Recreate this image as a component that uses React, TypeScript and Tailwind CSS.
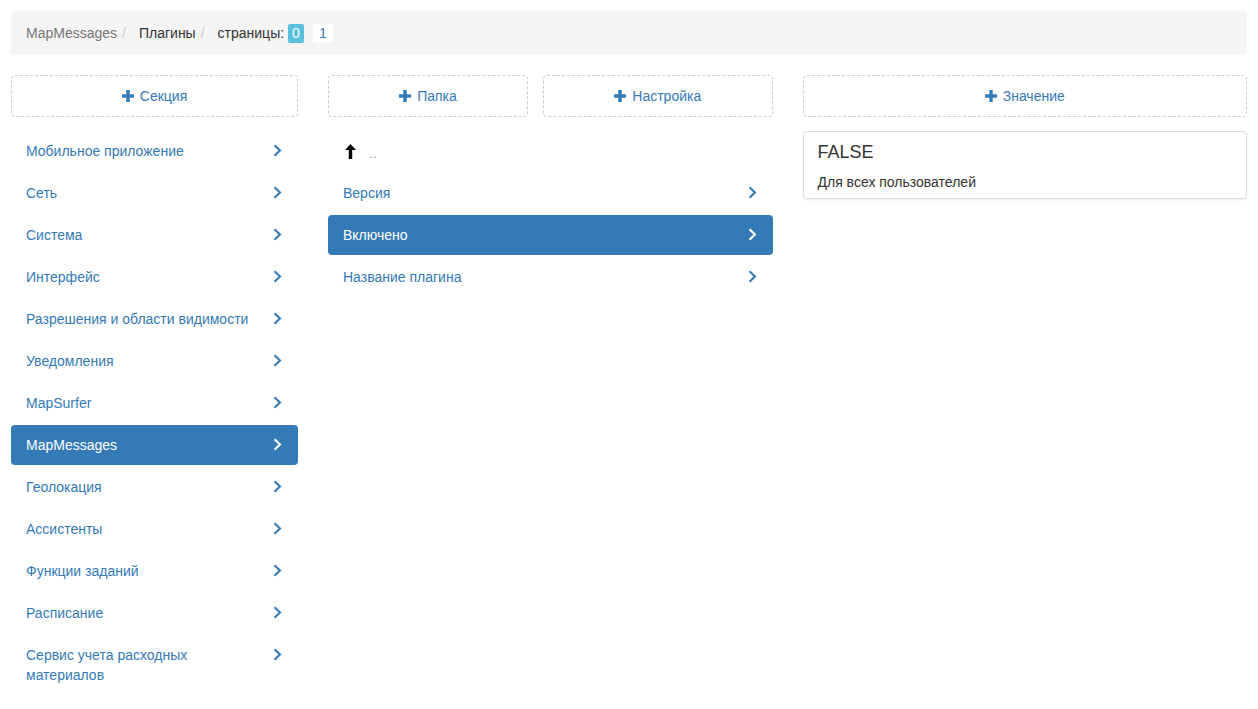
import React from 'react';

const sections = [
  'Мобильное приложение',
  'Сеть',
  'Система',
  'Интерфейс',
  'Разрешения и области видимости',
  'Уведомления',
  'MapSurfer',
  'MapMessages',
  'Геолокация',
  'Ассистенты',
  'Функции заданий',
  'Расписание',
  'Сервис учета расходных материалов',
];

const settings = ['Версия', 'Включено', 'Название плагина'];

const Plus = () => (
  <svg width="12" height="12" viewBox="0 0 12 12" className="mr-[6px] shrink-0">
    <rect x="4.3" y="0" width="3.4" height="12" fill="#337ab7" />
    <rect x="0" y="4.3" width="12" height="3.4" fill="#337ab7" />
  </svg>
);

const Chevron = ({ white }: { white?: boolean }) => (
  <svg width="9" height="13" viewBox="0 0 9 13" className="absolute right-[16px] top-[13px]">
    <polyline
      points="1.5,1.2 7,6.5 1.5,11.8"
      fill="none"
      stroke={white ? '#ffffff' : '#337ab7'}
      strokeWidth="2.1"
    />
  </svg>
);

const AddButton = ({ label, className = '' }: { label: string; className?: string }) => (
  <div
    className={`flex h-[42px] items-center justify-center rounded border border-dashed border-[#ccc] text-[#337ab7] ${className}`}
  >
    <Plus />
    <span>{label}</span>
  </div>
);

const Item = ({ label, active }: { label: string; active?: boolean }) => (
  <div
    className={`relative rounded py-[10px] pl-[15px] pr-[37px] ${
      active ? 'bg-[#337ab7] text-white' : 'text-[#337ab7]'
    }`}
  >
    {label}
    <Chevron white={active} />
  </div>
);

export default function App() {
  return (
    <div className="min-h-screen bg-white p-[11px] font-['Liberation_Sans',Arial,sans-serif] text-[14px] leading-[20px] text-[#333]">
      <div className="flex h-[44px] items-center rounded bg-[#f5f5f5] px-[15px]">
        <span className="text-[#777]">MapMessages</span>
        <span className="ml-[5px] text-[#ccc]">/</span>
        <span className="ml-[13px] text-[#333]">Плагины</span>
        <span className="ml-[5px] text-[#ccc]">/</span>
        <span className="ml-[13px] text-[#333]">страницы:</span>
        <span className="ml-[4px] rounded-[2px] bg-[#5bc0de] px-[4px] leading-[19px] text-white">0</span>
        <span className="ml-[9px] rounded-[2px] bg-white px-[6px] leading-[19px] text-[#337ab7]">1</span>
      </div>

      <div className="mt-[20px] flex gap-[30px]">
        <div className="w-[287px] shrink-0">
          <AddButton label="Секция" />
          <div className="mt-[14px] flex flex-col gap-[2px]">
            {sections.map((s) => (
              <Item key={s} label={s} active={s === 'MapMessages'} />
            ))}
          </div>
        </div>

        <div className="flex-1">
          <div className="flex gap-[15px]">
            <AddButton label="Папка" className="w-[200px]" />
            <AddButton label="Настройка" className="flex-1" />
          </div>
          <div className="mt-[14px] flex flex-col gap-[2px]">
            <div className="flex h-[40px] items-center pl-[17px]">
              <svg width="11" height="15" viewBox="0 0 11 15">
                <path d="M5.5 0 L11 6 L7.2 6 L7.2 15 L3.8 15 L3.8 6 L0 6 Z" fill="#000" />
              </svg>
              <span className="ml-[13px] mt-[6px] text-[12px] tracking-[1px] text-[#999]">..</span>
            </div>
            {settings.map((s) => (
              <Item key={s} label={s} active={s === 'Включено'} />
            ))}
          </div>
        </div>

        <div className="flex-1">
          <AddButton label="Значение" />
          <div className="mt-[14px] rounded border border-[#ddd] px-[14px] pb-[6px] pt-[9px] shadow-[0_1px_2px_rgba(0,0,0,0.08)]">
            <div className="text-[18px] leading-[22px]">FALSE</div>
            <div className="mt-[9px]">Для всех пользователей</div>
          </div>
        </div>
      </div>
    </div>
  );
}
